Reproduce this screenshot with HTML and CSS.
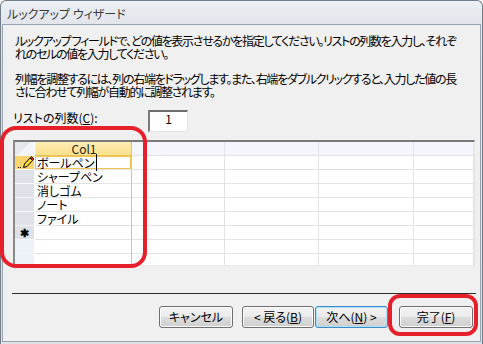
FILE: index.html
```html
<!DOCTYPE html>
<html lang="ja">
  <head>
    <meta charset="UTF-8" />
    <title>ルックアップ ウィザード</title>
    <link rel="stylesheet" href="styles.css">
  </head>
  <body>
    <div class="window">
      <div class="titlebar">ルックアップ ウィザード</div>

      <div class="client">
        <p class="intro">ルックアップ フィールドで、どの値を表示させるかを指定してください。リストの列数を入力し、それぞ<br>れのセルの値を入力してください。</p>
        <p class="intro second">列幅を調整するには、列の右端をドラッグします。また、右端をダブルクリックすると、入力した値の長<br>さに合わせて列幅が自動的に調整されます。</p>

        <div class="count-row">
          <label class="count-label">リストの列数(<u>C</u>):</label>
          <div class="count-box">1</div>
        </div>

        <div class="sheet">
          <table>
            <colgroup>
              <col style="width:20px"><col style="width:97px"><col style="width:93px"><col style="width:94px"><col style="width:95px"><col>
            </colgroup>
            <tr class="head">
              <td class="sel corner"></td><td class="col1">Col1</td><td></td><td></td><td></td><td></td>
            </tr>
            <tr>
              <td class="sel current">
                <svg width="16" height="13" viewBox="0 0 16 13">
                  <rect x="0" y="11" width="1" height="1" fill="#000"/>
                  <rect x="2" y="11" width="1" height="1" fill="#000"/>
                  <polygon points="5.5,11.5 6.5,8 12,2 14.5,4.5 9,10.5" fill="#f7dc2a" stroke="#000" stroke-width="1"/>
                  <polygon points="12,2 13.5,0.5 16,3 14.5,4.5" fill="#e02a1a" stroke="#000" stroke-width="0.8"/>
                </svg>
              </td>
              <td class="editing"><span class="caret">ボールペン</span></td><td></td><td></td><td></td><td></td>
            </tr>
            <tr><td class="sel"></td><td>シャープペン</td><td></td><td></td><td></td><td></td></tr>
            <tr><td class="sel"></td><td>消しゴム</td><td></td><td></td><td></td><td></td></tr>
            <tr><td class="sel"></td><td>ノート</td><td></td><td></td><td></td><td></td></tr>
            <tr><td class="sel"></td><td>ファイル</td><td></td><td></td><td></td><td></td></tr>
            <tr><td class="sel star">✱</td><td></td><td></td><td></td><td></td><td></td></tr>
            <tr class="empty"><td class="sel"></td><td></td><td></td><td></td><td></td><td></td></tr>
            <tr class="empty"><td class="sel"></td><td></td><td></td><td></td><td></td><td></td></tr>
          </table>
        </div>

        <div class="separator"></div>

        <div class="buttons">
          <button class="btn cancel">キャンセル</button>
          <button class="btn back">&lt; 戻る(<u>B</u>)</button>
          <button class="btn next">次へ(<u>N</u>) &gt;</button>
          <button class="btn finish">完了(<u>F</u>)</button>
        </div>
      </div>

      <!-- 赤い囲み -->
      <div class="mark mark-grid"></div>
      <div class="mark mark-finish"></div>
    </div>
  </body>
</html>
```

FILE: styles.css
```css
body {
  margin: 0;
  font-family: "Noto Sans CJK JP", "Noto Sans", sans-serif;
  font-size: 12px;
  color: #000;
  background: #fff;
}

.window {
  position: relative;
  width: 483px;
  height: 344px;
  box-sizing: border-box;
  border: 1px solid #727d8a;
  border-bottom: none;
  border-radius: 6px 6px 0 0;
  background: linear-gradient(#eceff3, #e1e5eb 24px, #dde2e8);
  padding: 0 1px;
  display: flex;
  flex-direction: column;
}

.titlebar {
  height: 23px;
  line-height: 20px;
  padding-top: 3px;
  box-sizing: border-box;
  padding-left: 5px;
  color: #3a3a3a;
  font-feature-settings: "palt";
}

.client {
  flex: 1;
  margin-bottom: 2px;
  background: #f0f0f0;
  border: 1px solid #9aa3ae;
  display: flex;
  flex-direction: column;
}

.intro {
  margin: 9px 0 0 12px;
  line-height: 13px;
  white-space: nowrap;
  font-feature-settings: "palt";
  letter-spacing: -1.3px;
}

.intro.second {
  margin-top: 12px;
}

.count-row {
  display: flex;
  align-items: flex-start;
  margin: 12px 0 0 10px;
}

.count-label {
  width: 135px;
  margin-top: 1px;
  line-height: 13px;
  font-feature-settings: "palt";
}

.count-box {
  width: 40px;
  height: 22px;
  box-sizing: border-box;
  background: #fff;
  border-top: 2px solid #6d6d6d;
  border-left: 2px solid #7a7a7a;
  border-right: 1px solid #e3e3e3;
  border-bottom: 1px solid #e3e3e3;
  text-align: center;
  line-height: 14px;
}

.sheet {
  margin: 8px 0 0 10px;
  width: 462px;
  height: 126px;
  box-sizing: border-box;
  border-top: 2px solid #7a7a7a;
  border-left: 2px solid #8a8a8a;
  border-right: 1px solid #e6e6e6;
  border-bottom: 1px solid #e6e6e6;
  background: #fff;
  overflow: hidden;
}

.sheet table {
  width: 100%;
  table-layout: fixed;
  border-collapse: separate;
  border-spacing: 0;
}

.sheet td {
  height: 13px;
  padding: 0 0 0 2px;
  border-right: 1px solid #e3e3e3;
  border-bottom: 1px solid #e3e3e3;
  line-height: 13px;
  white-space: nowrap;
  font-feature-settings: "palt";
}

.sheet td:nth-child(2) {
  border-right-color: #c4c4c4;
}

.head td {
  background: #f4f5fd;
  border-right-color: #e2e4ee;
}

.head td.col1 {
  background: linear-gradient(#fdedb4, #fbe08c);
  border-right-color: #e8c55a;
  border-bottom-color: #e8c55a;
  text-align: center;
  color: #1e1e1e;
}

.sel {
  background: #dee2e8;
  border-right-color: #ffffff !important;
  border-bottom-color: #f4f6f9 !important;
}

.sel.corner {
  background: linear-gradient(135deg, #e4e7ec 50%, #f3f4f7 50%);
}

.sel.current {
  background: #f9d36e;
  padding: 0;
}

.sel.current svg {
  display: block;
  margin: 0 0 0 3px;
}

.sel.star {
  font-size: 11px;
  text-align: center;
  padding: 0;
  font-weight: bold;
}

.empty .sel {
  background: #edf1f8;
}

td.editing {
  box-shadow: inset 0 0 0 1px #f0c552;
}

.caret {
  padding-right: 1px;
  border-right: 1px solid #000;
}

.separator {
  margin: 27px 4px 0 9px;
  border-top: 1px solid #2c2c2c;
}

.buttons {
  display: flex;
  justify-content: flex-end;
  padding-right: 7px;
  margin-top: 12px;
}

.btn {
  height: 22px;
  padding: 0;
  font-family: inherit;
  font-size: 12px;
  line-height: 18px;
  color: #000;
  border: 1px solid #707070;
  border-radius: 3px;
  background: linear-gradient(#f2f2f2, #ebebeb 50%, #dddddd 50%, #cfcfcf);
  box-shadow: inset 0 0 0 1px #fbfbfb;
  font-feature-settings: "palt";
}

.cancel { width: 74px; margin-right: 9px; }
.back { width: 72px; margin-right: 1px; }
.next {
  width: 73px;
  margin-right: 11px;
  border-color: #3c8ccc;
  box-shadow: inset 0 0 0 1px #a9e1f8;
}
.finish { width: 74px; }

.mark {
  position: absolute;
  box-sizing: border-box;
  border: 4px solid #e6202b;
}

.mark-grid {
  left: -1px;
  top: 125px;
  width: 147px;
  height: 142px;
  border-radius: 16px;
}

.mark-finish {
  left: 387px;
  top: 293px;
  width: 90px;
  height: 42px;
  border-radius: 12px;
}
```
